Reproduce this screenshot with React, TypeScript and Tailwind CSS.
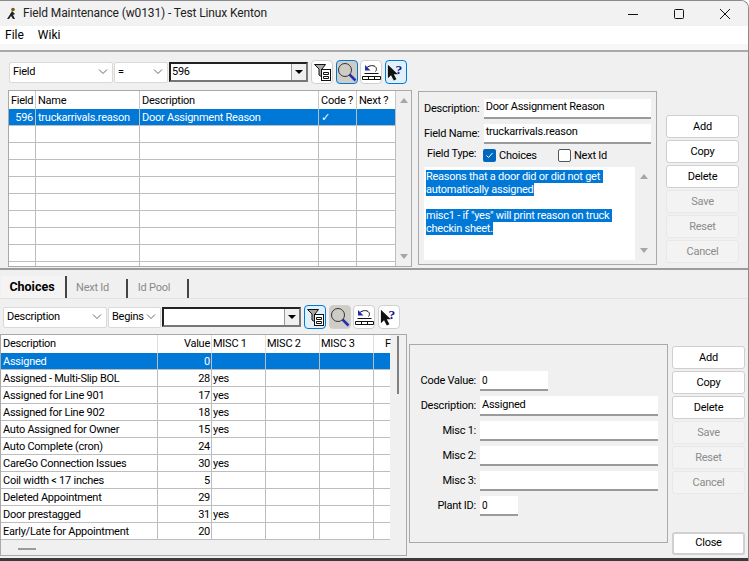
const upperCols = "grid-cols-[27px_104px_179px_38px_39px]";
const lowerCols = "grid-cols-[157px_54px_54px_54px_54px_17px]";

const lowerRows = [
  ["Assigned - Multi-Slip BOL", "28", "yes"],
  ["Assigned for Line 901", "17", "yes"],
  ["Assigned for Line 902", "18", "yes"],
  ["Auto Assigned for Owner", "15", "yes"],
  ["Auto Complete (cron)", "24", ""],
  ["CareGo Connection Issues", "30", "yes"],
  ["Coil width < 17 inches", "5", ""],
  ["Deleted Appointment", "29", ""],
  ["Door prestagged", "31", "yes"],
  ["Early/Late for Appointment", "20", ""],
];

const FilterIcon = () => (
  <svg width="17" height="17" viewBox="0 0 17 17" fill="none" stroke="#111" strokeWidth="1">
    <path d="M.5 .5h11L8 5v8L5 11V5z" fill="#a8a8a8" />
    <rect x="7.500" y="5.500" width="9" height="11" fill="#fff" />
    <path d="M9.500 8.500h5v2h-5zM9.500 12.500h5v2h-5z" />
  </svg>
);

const SearchIcon = () => (
  <svg width="20" height="20" viewBox="0 0 20 20" fill="none">
    <circle cx="8" cy="8" r="6.500" stroke="#333" strokeWidth="1" />
    <path d="M12.500 12.500l6 6" stroke="#1f2fb0" strokeWidth="2.500" />
  </svg>
);

const ResetIcon = () => (
  <svg width="19" height="16" viewBox="0 0 19 16" fill="none" stroke="#111" strokeWidth="1">
    <path d="M5 3.500c2-2 7-3 9 0 .7 1.200 .5 3-.5 4" />
    <path d="M3 1v5.500h5.500z" fill="#1f2fb0" stroke="none" />
    <path d="M2.500 9.500h14M.5 12.500h18v3H.5zM6.500 12.500v3M12.500 12.500v3" />
  </svg>
);

const HelpIcon = () => (
  <svg width="18" height="18" viewBox="0 0 20 20">
    <path d="M1 2v15l3.500-3.500L7.500 19.500l3-1.500-3-5.500H12z" fill="#111" />
    <text x="9.500" y="12" fontSize="15" fontWeight="700" fontFamily="Liberation Serif, serif" fill="#16168f">?</text>
  </svg>
);

const ToolButton = ({ active, pressed, children }: { active?: boolean; pressed?: boolean; children: React.ReactNode }) => (
  <div
    className={`flex h-[24px] w-[22px] shrink-0 items-center justify-center rounded-[4px] border ${
      active ? "border-[#0078d4]" : "border-[#d0d0d0]"
    } ${pressed ? "bg-[#cfccc6]" : active ? "bg-[#e1f0fa]" : "bg-white"}`}
  >
    {children}
  </div>
);

const Select = ({ label, width }: { label: string; width: string }) => (
  <div className={`flex h-[21px] items-center justify-between rounded-[2px] border border-[#d9d9d9] bg-white pl-[3px] pr-[4px] ${width}`}>
    <span className="overflow-hidden whitespace-nowrap">{label}</span>
    <svg width="10" height="6" viewBox="0 0 10 6" fill="none" stroke="#666" className="shrink-0">
      <path d="M1 .5l4 4 4-4" />
    </svg>
  </div>
);

const Combo = ({ value, width }: { value: string; width: string }) => (
  <div className={`flex h-[20px] items-center justify-between border-2 border-b-[#777] border-l-[#222] border-r-[#777] border-t-[#222] bg-white ${width}`}>
    <span className="pl-px">{value}</span>
    <div className="flex h-full w-[15px] items-center justify-center border-l border-[#999] bg-[#f0f0f0]">
      <div className="h-0 w-0 border-x-[4px] border-t-[4px] border-x-transparent border-t-black" />
    </div>
  </div>
);

const SideButton = ({ label, disabled }: { label: string; disabled?: boolean }) => (
  <div
    className={`flex h-[23px] w-[73px] items-center justify-center rounded-[3px] border pt-[1px] ${
      disabled ? "border-[#e8e8e8] bg-[#f3f3f3] text-[#8c8c8c]" : "border-[#cfcfcf] bg-white text-black"
    }`}
  >
    {label}
  </div>
);

const TextBox = ({ value, width, small }: { value: string; width: string; small?: boolean }) => (
  <div className={`flex h-[20px] items-center border-b-2 border-[#9a9a9a] bg-white pl-[2px] ${width} ${small ? "text-[10px]" : ""}`}>
    {value}
  </div>
);

const ScrollArrow = ({ up }: { up?: boolean }) => (
  <div
    className={`h-0 w-0 border-x-[4px] border-x-transparent ${
      up ? "border-b-[5px] border-b-[#a6a6a6]" : "border-t-[5px] border-t-[#a6a6a6]"
    }`}
  />
);

const UpperGridRow = ({ cells, selected, last }: { cells: string[]; selected?: boolean; last?: boolean }) => (
  <div
    className={`grid ${upperCols} ${last ? "h-[6px]" : "h-[17px]"} ${
      selected ? "bg-[#0078d7] text-white" : "bg-white"
    } border-b border-[#bdbdbd]`}
  >
    {cells.map((c, i) => (
      <div key={i} className={`overflow-hidden whitespace-nowrap border-r border-[#bdbdbd] px-[2px] leading-[17px] ${i === 0 ? "text-right" : ""}`}>
        {c}
      </div>
    ))}
  </div>
);

const LowerGridRow = ({ row, selected }: { row: string[]; selected?: boolean }) => (
  <div className={`grid ${lowerCols} h-[17px] border-b border-[#bdbdbd] ${selected ? "bg-[#0078d7] text-white" : "bg-white"}`}>
    <div className="overflow-hidden whitespace-nowrap border-r border-[#bdbdbd] pl-[2px] leading-[17px]">{row[0]}</div>
    <div className="border-r border-[#bdbdbd] pr-[1px] text-right leading-[17px]">{row[1]}</div>
    <div className="border-r border-[#bdbdbd] pl-[1px] leading-[17px]">{row[2]}</div>
    <div className="border-r border-[#bdbdbd]" />
    <div className="border-r border-[#bdbdbd]" />
    <div />
  </div>
);

const FormLine = ({ label, children }: { label: string; children: React.ReactNode }) => (
  <div className="flex h-[25px] items-center">
    <div className="w-[70px] pr-[4px] text-right">{label}</div>
    {children}
  </div>
);

export default function App() {
  const empty = ["", "", "", "", ""];
  return (
    <div className="flex h-[561px] w-[749px] flex-col overflow-hidden rounded-tr-[8px] border-r border-t border-[#8a8a8a] bg-[#f0f0f0] font-['Roboto',sans-serif] text-[11px] tracking-[-0.25px] text-black">
      {/* title bar */}
      <div className="flex h-[25px] shrink-0 items-center justify-between bg-[#f2f2f2] pl-[5px]">
        <div className="flex items-center">
          <svg width="12" height="14" viewBox="0 0 12 14" className="ml-[1px]">
            <circle cx="7" cy="2.500" r="1.800" fill="#7a5a10" />
            <path d="M6 4L3 9l-2 3h2l2-3 2 3h2L7 8l2-1-1-1z" fill="#222" />
          </svg>
          <span className="ml-[5px] pb-[1px] text-[12px] tracking-[-0.12px] text-[#222]">Field Maintenance (w0131) - Test Linux Kenton</span>
        </div>
        <div className="flex items-center gap-[34px] pr-[17px]">
          <svg width="12" height="12" viewBox="0 0 12 12" stroke="#111"><path d="M1 6.500h10" /></svg>
          <svg width="12" height="12" viewBox="0 0 12 12" stroke="#111" fill="none"><rect x="1.500" y="1.500" width="9" height="9" rx="1" /></svg>
          <svg width="12" height="12" viewBox="0 0 12 12" stroke="#111" fill="none"><path d="M1 1l10 10M11 1L1 11" /></svg>
        </div>
      </div>

      {/* menu */}
      <div className="flex h-[18px] shrink-0 items-center gap-[14px] bg-white pl-[5px] text-[12px] tracking-normal">
        <span>File</span>
        <span>Wiki</span>
      </div>
      <div className="h-[6px] shrink-0 bg-[#f7f7f7]" />

      {/* upper section */}
      <div className="h-[220px] shrink-0 border-y-2 border-[#a9a9a9] border-b-[#9c9c9c] pl-[8px] pt-[8px]">
        <div className="flex items-center gap-[1px] pl-[1px]">
          <Select label="Field" width="w-[104px]" />
          <Select label="=" width="w-[54px]" />
          <Combo value="596" width="w-[139px]" />
          <div className="ml-[2px] flex gap-[2.5px]">
            <ToolButton><FilterIcon /></ToolButton>
            <ToolButton active pressed><SearchIcon /></ToolButton>
            <ToolButton><ResetIcon /></ToolButton>
            <ToolButton active><HelpIcon /></ToolButton>
          </div>
        </div>

        <div className="mt-[6px] flex">
          <div className="flex h-[177px] w-[404px] shrink-0 overflow-hidden border border-[#a9a9a9]">
            <div className="w-[387px] shrink-0">
              <div className={`grid ${upperCols} h-[18px] bg-white`}>
                {["Field", "Name", "Description", "Code ?", "Next ?"].map((h) => (
                  <div key={h} className="overflow-hidden whitespace-nowrap border-r border-[#c8c8c8] px-[2px] leading-[19px]">{h}</div>
                ))}
              </div>
              <UpperGridRow cells={["596", "truckarrivals.reason", "Door Assignment Reason", "✓", ""]} selected />
              {Array.from({ length: 8 }).map((_, i) => (
                <UpperGridRow key={i} cells={empty} />
              ))}
              <UpperGridRow cells={empty} last />
            </div>
            <div className="flex flex-1 flex-col items-center justify-between py-[7px]">
              <ScrollArrow up />
              <ScrollArrow />
            </div>
          </div>

          <div className="ml-[6px] mt-[1px] h-[174px] w-[239px] shrink-0 border border-[#a9a9a9] px-[5px] pt-[4px]">
            <div className="flex h-[25px] items-center">
              <div className="w-[60px] whitespace-nowrap pt-[1px]">Description:</div>
              <TextBox value="Door Assignment Reason" width="w-[168px]" />
            </div>
            <div className="flex h-[25px] items-center">
              <div className="w-[60px] whitespace-nowrap pt-[1px]">Field Name:</div>
              <TextBox value="truckarrivals.reason" width="w-[168px]" />
            </div>
            <div className="flex h-[19px] items-center">
              <div className="w-[59px] whitespace-nowrap pb-[3px] pl-[3px]">Field Type:</div>
              <div className="flex items-center">
                <div className="flex h-[13px] w-[13px] items-center justify-center rounded-[2px] bg-[#0067c0]">
                  <svg width="9" height="9" viewBox="0 0 9 9" fill="none" stroke="#fff" strokeWidth="1"><path d="M1.500 4.500l2 2 4-4.500" /></svg>
                </div>
                <span className="ml-[3px] w-[59px] pt-[1px]">Choices</span>
                <div className="h-[13px] w-[13px] rounded-[2px] border border-[#555] bg-white" />
                <span className="ml-[3px] pt-[1px]">Next Id</span>
              </div>
            </div>
            <div className="mt-[2px] flex h-[93px] w-[229px] bg-white">
              <div className="w-[211px] shrink-0 pl-[2px] leading-[13px]">
                <div className="mt-[3px] w-fit bg-[#0078d7] pr-[3px] text-white">Reasons that a door did or did not get</div>
                <div className="w-fit bg-[#0078d7] text-white">automatically assigned</div>
                <div className="h-[13px]" />
                <div className="w-fit bg-[#0078d7] pr-[3px] text-white">misc1 - if "yes" will print reason on truck</div>
                <div className="w-fit bg-[#0078d7] text-white">checkin sheet.</div>
              </div>
              <div className="flex flex-1 flex-col items-center justify-between bg-[#f0f0f0] py-[7px]">
                <ScrollArrow up />
                <ScrollArrow />
              </div>
            </div>
          </div>

          <div className="ml-[9px] mt-[25px] flex flex-col gap-[2px]">
            <SideButton label="Add" />
            <SideButton label="Copy" />
            <SideButton label="Delete" />
            <SideButton label="Save" disabled />
            <SideButton label="Reset" disabled />
            <SideButton label="Cancel" disabled />
          </div>
        </div>
      </div>

      {/* tabs */}
      <div className="flex h-[29px] shrink-0 items-end border-b border-[#e2e2e2] pl-[1px]">
        <div className="flex h-[22px] w-[66px] items-center justify-center border-r-2 border-[#444] bg-[#f4f4f4] pr-[2px] pt-[1px] text-[12.500px] font-bold tracking-normal">Choices</div>
        <div className="ml-[1px] flex h-[19px] w-[60px] items-center justify-center border-r-2 border-[#444] pr-[9px] text-[#8a8a8a]">Next Id</div>
        <div className="flex h-[19px] w-[61px] items-center justify-center border-r-2 border-[#444] pr-[7px] text-[#8a8a8a]">Id Pool</div>
      </div>

      {/* lower section */}
      <div className="flex-1">
        <div className="mt-[6px] flex items-center gap-[1px] pl-[3px]">
          <Select label="Description" width="w-[104px]" />
          <Select label="Begins" width="w-[53px]" />
          <Combo value="" width="w-[139px]" />
          <div className="ml-[2px] flex gap-[2.5px]">
            <ToolButton active><FilterIcon /></ToolButton>
            <ToolButton pressed><SearchIcon /></ToolButton>
            <ToolButton><ResetIcon /></ToolButton>
            <ToolButton><HelpIcon /></ToolButton>
          </div>
        </div>

        <div className="mt-[5px] flex">
          <div className="flex h-[222px] w-[407px] shrink-0 flex-col border border-[#a9a9a9]">
            <div className="flex">
              <div className="w-[389px] shrink-0">
                <div className={`grid ${lowerCols} h-[18px] bg-white`}>
                  <div className="border-r border-[#dedede] pl-[2px] leading-[17px]">Description</div>
                  <div className="border-r border-[#dedede] pr-[1px] text-right leading-[17px]">Value</div>
                  <div className="border-r border-[#dedede] pl-[1px] leading-[17px]">MISC 1</div>
                  <div className="border-r border-[#dedede] pl-[1px] leading-[17px]">MISC 2</div>
                  <div className="border-r border-[#dedede] pl-[1px] leading-[17px]">MISC 3</div>
                  <div className="overflow-hidden pl-[11px] leading-[17px]">F</div>
                </div>
                <LowerGridRow row={["Assigned", "0", ""]} selected />
                {lowerRows.map((r) => (
                  <LowerGridRow key={r[0]} row={r} />
                ))}
              </div>
              <div className="flex flex-1 justify-center pt-[1px]">
                <div className="h-[58px] w-[2px] bg-[#808080]" />
              </div>
            </div>
            <div className="ml-[17px] mt-[8px] h-[2px] w-[18px] bg-[#9a9a9a]" />
          </div>

          <div className="ml-[2px] mt-[10px] flex h-[199px] w-[259px] shrink-0 flex-col justify-center border border-[#a9a9a9]">
            <FormLine label="Code Value:"><TextBox value="0" width="w-[68px]" small /></FormLine>
            <FormLine label="Description:"><TextBox value="Assigned" width="w-[178px]" /></FormLine>
            <FormLine label="Misc 1:"><TextBox value="" width="w-[178px]" /></FormLine>
            <FormLine label="Misc 2:"><TextBox value="" width="w-[178px]" /></FormLine>
            <FormLine label="Misc 3:"><TextBox value="" width="w-[178px]" /></FormLine>
            <FormLine label="Plant ID:"><TextBox value="0" width="w-[38px]" small /></FormLine>
          </div>

          <div className="ml-[4px] mt-[12px] flex flex-col gap-[2px]">
            <SideButton label="Add" />
            <SideButton label="Copy" />
            <SideButton label="Delete" />
            <SideButton label="Save" disabled />
            <SideButton label="Reset" disabled />
            <SideButton label="Cancel" disabled />
            <div className="mt-[36px] flex h-[23px] w-[73px] items-center justify-center rounded-[3px] border-2 border-[#d0d0d0] bg-white">Close</div>
          </div>
        </div>
      </div>

      <div className="h-[3px] shrink-0 bg-[#3a3a3a]" />
    </div>
  );
}
